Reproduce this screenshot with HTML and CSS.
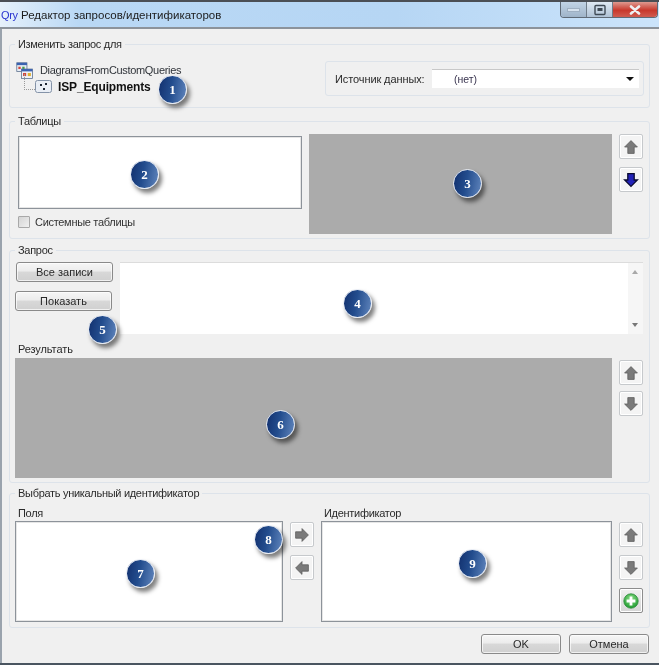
FILE: index.html
```html
<!DOCTYPE html>
<html lang="ru">
<head>
<meta charset="utf-8">
<title>Редактор запросов/идентификаторов</title>
<link rel="stylesheet" href="styles.css">
</head>
<body>
<div class="window">
  <header class="titlebar">
    <span class="app-icon">Qry</span>
    <span class="title">Редактор запросов/идентификаторов</span>
    <div class="controls">
      <span class="ctl ctl-min"><svg width="14" height="6" viewBox="0 0 14 6"><rect x="0.5" y="1.5" width="12" height="3" fill="#d6e2ee" stroke="#9fb0c2"/></svg></span>
      <span class="ctl ctl-max"><svg width="14" height="12" viewBox="0 0 14 12"><rect x="2" y="1.5" width="10" height="9" rx="1" fill="none" stroke="#3f4a55" stroke-width="1.4"/><rect x="4.5" y="4" width="5" height="3" fill="#3f4a55"/></svg></span>
      <span class="ctl ctl-close"><svg width="14" height="10" viewBox="0 0 14 10"><path d="M3 1.5 L11 8.5 M11 1.5 L3 8.5" stroke="#eef0f2" stroke-width="2.6" stroke-linecap="round"/></svg></span>
    </div>
  </header>

  <main class="body">
    <fieldset class="group g1">
      <legend>Изменить запрос для</legend>
      <div class="g1-row">
        <div class="tree">
          <div class="tree-root">
            <svg class="root-icon" width="18" height="18" viewBox="0 0 23 23">
              <rect x="1" y="1" width="13" height="11" fill="#e8eef6" stroke="#5b6f8c"/><rect x="1" y="1" width="13" height="3" fill="#3b62b0"/><rect x="3" y="6" width="3" height="3" fill="#d2453a"/><rect x="8" y="6" width="3" height="3" fill="#4a9e4a"/>
              <rect x="7" y="9" width="14" height="12" fill="#eef2f8" stroke="#5b6f8c"/><rect x="7" y="9" width="14" height="3" fill="#3b62b0"/><rect x="9" y="14" width="4" height="4" fill="#d2453a"/><rect x="15" y="14" width="4" height="4" fill="#e0b030"/>
            </svg>
            <span class="root-name">DiagramsFromCustomQueries</span>
          </div>
          <div class="tree-child">
            <span class="connector"></span>
            <svg class="child-icon" width="17" height="13" viewBox="0 0 17 13">
              <rect x="0.5" y="0.5" width="16" height="12" rx="2" fill="#e9eef5" stroke="#8493a8"/>
              <rect x="5" y="4" width="2" height="2" fill="#1c2533"/><rect x="10" y="3" width="2" height="2" fill="#1c2533"/><rect x="8" y="8" width="2" height="2" fill="#1c2533"/>
            </svg>
            <strong class="child-name">ISP_Equipments</strong>
          </div>
        </div>
        <div class="source-box">
          <span class="source-label">Источник данных:</span>
          <div class="combo"><span class="combo-val">(нет)</span><span class="combo-arrow"></span></div>
        </div>
      </div>
    </fieldset>

    <fieldset class="group g2">
      <legend>Таблицы</legend>
      <div class="g2-row">
        <div class="g2-left">
          <div class="listbox tables-list"></div>
          <label class="check"><span class="checkbox"></span>Системные таблицы</label>
        </div>
        <div class="grid-gray tables-grid"></div>
        <div class="side-btns">
          <button class="icon-btn"><svg viewBox="0 0 20 20"><path class="arrow-gray" d="M10 2 L18 10 L14 10 L14 18 L6 18 L6 10 L2 10 Z"/></svg></button>
          <button class="icon-btn"><svg viewBox="0 0 20 20"><path class="arrow-blue" d="M10 18 L18 10 L14 10 L14 2 L6 2 L6 10 L2 10 Z"/></svg></button>
        </div>
      </div>
    </fieldset>

    <fieldset class="group g3">
      <legend>Запрос</legend>
      <div class="query-row">
        <div class="query-btns">
          <button class="btn btn-all">Все записи</button>
          <button class="btn btn-show">Показать</button>
        </div>
        <div class="query-text">
          <div class="scrollbar"><span class="sb-up"></span><span class="sb-down"></span></div>
        </div>
      </div>
      <div class="res-label">Результать</div>
      <div class="result-row">
        <div class="grid-gray result-grid"></div>
        <div class="side-btns result-btns">
          <button class="icon-btn"><svg viewBox="0 0 20 20"><path class="arrow-gray" d="M10 2 L18 10 L14 10 L14 18 L6 18 L6 10 L2 10 Z"/></svg></button>
          <button class="icon-btn"><svg viewBox="0 0 20 20"><path class="arrow-gray" d="M10 18 L18 10 L14 10 L14 2 L6 2 L6 10 L2 10 Z"/></svg></button>
        </div>
      </div>
    </fieldset>

    <fieldset class="group g4">
      <legend>Выбрать уникальный идентификатор</legend>
      <div class="id-row">
        <div class="id-col fields-col">
          <div class="col-label">Поля</div>
          <div class="listbox fields-list"></div>
        </div>
        <div class="side-btns mid-btns">
          <button class="icon-btn"><svg viewBox="0 0 20 20"><path class="arrow-gray" d="M18 10 L10 2 L10 6 L2 6 L2 14 L10 14 L10 18 Z"/></svg></button>
          <button class="icon-btn"><svg viewBox="0 0 20 20"><path class="arrow-gray" d="M2 10 L10 2 L10 6 L18 6 L18 14 L10 14 L10 18 Z"/></svg></button>
        </div>
        <div class="id-col ident-col">
          <div class="col-label">Идентификатор</div>
          <div class="listbox ident-list"></div>
        </div>
        <div class="side-btns id-btns">
          <button class="icon-btn"><svg viewBox="0 0 20 20"><path class="arrow-gray" d="M10 2 L18 10 L14 10 L14 18 L6 18 L6 10 L2 10 Z"/></svg></button>
          <button class="icon-btn"><svg viewBox="0 0 20 20"><path class="arrow-gray" d="M10 18 L18 10 L14 10 L14 2 L6 2 L6 10 L2 10 Z"/></svg></button>
          <button class="icon-btn add-btn"><svg viewBox="0 0 20 20"><defs><radialGradient id="gr" cx="50%" cy="35%" r="65%"><stop offset="0" stop-color="#8fe08a"/><stop offset="1" stop-color="#1d9a2e"/></radialGradient></defs><circle cx="10" cy="10" r="9" fill="url(#gr)" stroke="#2c8a3a"/><path d="M10 4.5 V15.5 M4.5 10 H15.5" stroke="#fff" stroke-width="3.5"/></svg></button>
        </div>
      </div>
    </fieldset>

    <footer class="footer">
      <button class="btn btn-foot">OK</button>
      <button class="btn btn-foot">Отмена</button>
    </footer>
  </main>

  <span class="badge b1">1</span>
  <span class="badge b2">2</span>
  <span class="badge b3">3</span>
  <span class="badge b4">4</span>
  <span class="badge b5">5</span>
  <span class="badge b6">6</span>
  <span class="badge b7">7</span>
  <span class="badge b8">8</span>
  <span class="badge b9">9</span>
</div>
</body>
</html>
```
FILE: styles.css
```css
* { box-sizing: border-box; }
html, body { margin: 0; padding: 0; background: #f0f0f0; }
body { font-family: "Liberation Sans", "Noto Sans", sans-serif; font-size: 11px; color: #2a2a2a; }

.window {
  position: relative;
  width: 659px;
  height: 665px;
  display: flex;
  flex-direction: column;
  overflow: hidden;
  background: #f0f0f0;
  border-bottom: 2px solid #4a5560;
  filter: blur(0.3px);
}

.titlebar {
  height: 29px;
  flex: none;
  display: flex;
  align-items: center;
  padding-left: 1px;
  border-top: 2px solid #4b4f55;
  border-bottom: 2px solid #8c939b;
  background: linear-gradient(90deg, #e6f1fb 0, #b9d8f5 12%, #b6d6f4 60%, #cbe4fb 100%);
  position: relative;
}
.app-icon { width: 19px; font-size: 11px; font-weight: 400; color: #2a35d0; letter-spacing: -0.3px; }
.title { margin-left: 1px; font-size: 11.5px; color: #1c1c1c; }

.controls {
  margin-left: auto;
  align-self: flex-start;
  display: flex;
  margin-right: 1px;
  height: 16px;
  border: 1px solid #5f6a76;
  border-top: 0;
  border-radius: 0 0 4px 4px;
  overflow: hidden;
}
.ctl { display: flex; align-items: center; justify-content: center; }
.ctl-min { width: 26px; background: linear-gradient(#c2d4e6, #9fb4c9); border-right: 1px solid #6f7c89; }
.ctl-max { width: 26px; background: linear-gradient(#dfe9f3, #b0c3d6); border-right: 1px solid #6f7c89; }
.ctl-close { width: 44px; background: linear-gradient(#dd9a90 0, #c8382c 55%, #d05c50 100%); }

.body {
  flex: 1;
  display: flex;
  flex-direction: column;
  padding: 8px 9px 0 9px;
  border-left: 2px solid #9aa3ad;
  background: #f0f0f0;
}

.group {
  margin: 0 0 0 -2px;
  padding: 0;
  min-width: 0;
  width: 641px;
  border: 1px solid #dde3ea;
  border-radius: 3px;
  flex: none;
}
.group legend {
  margin-left: 5px;
  padding: 0 3px;
  font-size: 11px;
  letter-spacing: -0.3px;
  line-height: 14px;
  height: 14px;
  color: #2a2a2a;
}

.g1 { height: 71px; }
.g2 { height: 125px; margin-top: 6px; }
.g3 { height: 240px; margin-top: 4px; }
.g4 { height: 142px; margin-top: 3px; }

.g1-row { display: flex; justify-content: space-between; padding: 9px 5px 0 6px; }
.tree { width: 200px; }
.tree-root { display: flex; align-items: flex-start; height: 20px; }
.root-icon { margin-top: 2px; flex: none; }
.root-name { margin: 4px 0 0 6px; font-size: 11px; letter-spacing: -0.32px; color: #30343a; white-space: nowrap; }
.tree-child { display: flex; align-items: center; position: relative; padding-left: 8px; height: 15px; margin-top: -1px; }
.connector { width: 11px; height: 16px; margin-top: -9px; border-left: 1px dotted #999; border-bottom: 1px dotted #999; flex: none; }
.child-icon { flex: none; }
.child-name { margin-left: 6px; font-size: 12px; letter-spacing: -0.15px; font-weight: 700; color: #111; white-space: nowrap; }

.source-box {
  width: 319px;
  height: 35px;
  margin-top: 1px;
  border: 1px solid #dde3ea;
  border-radius: 3px;
  display: flex;
  align-items: center;
  padding: 0 4px 0 9px;
}
.source-label { width: 97px; font-size: 11px; letter-spacing: -0.1px; }
.combo {
  width: 207px;
  height: 19px;
  background: #fff;
  border-top: 1px solid #c8c8c8;
  display: flex;
  align-items: center;
  justify-content: space-between;
  padding: 0 5px 0 22px;
}
.combo-val { font-size: 10.5px; color: #3a3550; }
.combo-arrow { width: 0; height: 0; border-left: 4px solid transparent; border-right: 4px solid transparent; border-top: 4px solid #111; }

.g2-row { display: flex; padding: 0 0 0 8px; margin-top: 6px; }
.g2-left { width: 284px; padding-top: 2px; }
.listbox { background: #fff; border: 1px solid #8d939a; box-shadow: inset 0 0 0 1px #e6e6e6; }
.tables-list { height: 73px; }
.check { display: flex; align-items: center; height: 12px; margin-top: 7px; font-size: 11px; letter-spacing: -0.3px; color: #333; }
.checkbox { width: 12px; height: 12px; margin-right: 5px; border: 1px solid #a8a8a8; border-radius: 1px; background: linear-gradient(135deg, #d4d4d4, #f0f0f0); }
.grid-gray { background: #ababab; }
.tables-grid { width: 303px; height: 100px; margin-left: 7px; }
.side-btns { display: flex; flex-direction: column; gap: 8px; margin-left: 7px; }

.icon-btn {
  width: 24px;
  height: 25px;
  padding: 0;
  display: flex;
  align-items: center;
  justify-content: center;
  background: #f4f4f4;
  border: 1px solid #c6c9cc;
  border-radius: 2px;
  box-shadow: inset 0 0 0 1px #fff;
}
.icon-btn svg { width: 16px; height: 16px; }
.add-btn { background: linear-gradient(#f0f0f0, #d6d6d6); border-color: #8d8d8d; }
.arrow-gray { fill: #7a7a7a; stroke: #5f5f5f; stroke-width: 1; }
.arrow-blue { fill: #2222b8; stroke: #0b0b30; stroke-width: 1.6; }

.query-row { display: flex; padding-left: 5px; margin-top: 5px; align-items: flex-start; gap: 7px; }
.query-btns { width: 98px; display: flex; flex-direction: column; }
.btn {
  font: inherit;
  color: #2a2a2a;
  padding: 0;
  height: 20px;
  border: 1px solid #8a8a8a;
  border-radius: 3px;
  background: linear-gradient(#f6f6f6 0, #ececec 45%, #d8d8d8 50%, #d0d0d0 100%);
  box-shadow: inset 0 0 0 1px rgba(255,255,255,.7);
}
.btn-all { width: 97px; margin-left: 1px; }
.btn-show { width: 97px; margin-top: 9px; }
.query-text { position: relative; width: 523px; height: 72px; background: #fff; border-top: 1px solid #dcdcdc; }
.scrollbar { position: absolute; top: 0; right: 0; width: 15px; height: 100%; background: #f6f6f6; }
.sb-up, .sb-down { position: absolute; left: 4px; width: 0; height: 0; border-left: 3.5px solid transparent; border-right: 3.5px solid transparent; }
.sb-up { top: 7px; border-bottom: 4px solid #a8a8a8; }
.sb-down { bottom: 7px; border-top: 4px solid #777; }

.res-label { margin: 8px 0 0 8px; line-height: 14px; height: 16px; font-size: 11px; letter-spacing: -0.1px; }
.result-row { display: flex; padding-left: 5px; }
.result-grid { width: 597px; height: 120px; }
.result-btns { margin-top: 2px; gap: 6px; }

.id-row { display: flex; padding-left: 5px; }
.id-col { display: flex; flex-direction: column; }
.col-label { line-height: 14px; height: 14px; margin: 6px 0 1px 3px; font-size: 11px; letter-spacing: -0.3px; white-space: nowrap; }
.fields-col { width: 268px; }
.ident-col { width: 291px; margin-left: 7px; }
.fields-list, .ident-list { height: 101px; }
.mid-btns { padding-top: 22px; }
.id-btns { padding-top: 22px; }

.footer { display: flex; justify-content: flex-end; gap: 8px; margin-top: 6px; padding-right: 1px; }
.btn-foot { width: 80px; height: 20px; }

.badge {
  position: absolute;
  width: 29px;
  height: 29px;
  border-radius: 50%;
  display: flex;
  align-items: center;
  justify-content: center;
  background: linear-gradient(100deg, #12306e 0, #234d8e 45%, #6186bd 100%);
  border: 1px solid #e4e9f2;
  box-shadow: 3px 4px 4px rgba(0,0,0,.5);
  color: #fff;
  font-family: "Liberation Serif", serif;
  font-weight: 700;
  font-size: 13px;
}
.b1 { left: 158px; top: 75px; }
.b2 { left: 130px; top: 160px; }
.b3 { left: 453px; top: 169px; }
.b4 { left: 343px; top: 289px; }
.b5 { left: 88px; top: 315px; }
.b6 { left: 266px; top: 410px; }
.b7 { left: 126px; top: 559px; }
.b8 { left: 254px; top: 525px; }
.b9 { left: 458px; top: 549px; }
```
